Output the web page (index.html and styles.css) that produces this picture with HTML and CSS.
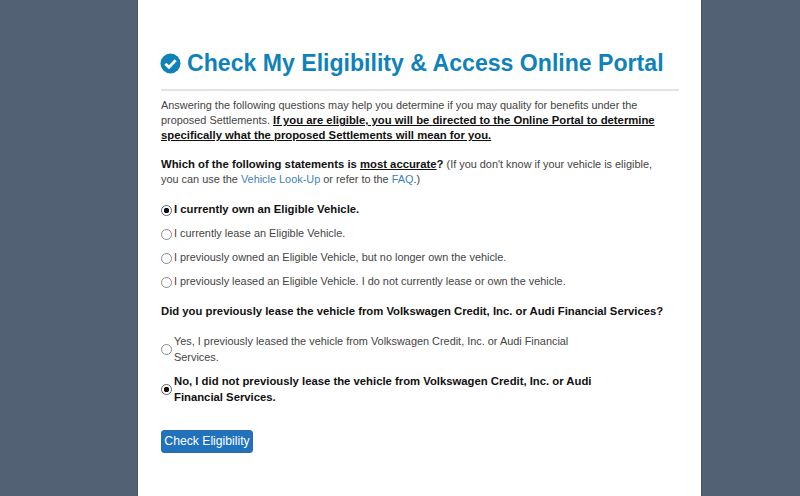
FILE: index.html
```html
<!DOCTYPE html>
<html lang="en">
<head>
  <meta charset="UTF-8">
  <title>Check My Eligibility</title>
  <link rel="stylesheet" href="styles.css">
</head>
<body>
  <div class="panel">
    <h1 class="page-title">
      <svg class="title-icon" viewBox="0 0 22 22" aria-hidden="true">
        <circle cx="11" cy="11" r="10.5" fill="#0f82b9"/>
        <path d="M5.6 11.2l3.8 3.8 7-7.4" fill="none" stroke="#fff" stroke-width="3"/>
      </svg>
      <span>Check My Eligibility &amp; Access Online Portal</span>
    </h1>

    <p class="intro">Answering the following questions may help you determine if you may quality for benefits under the proposed Settlements. <b><u>If you are eligible, you will be directed to the Online Portal to determine specifically what the proposed Settlements will mean for you.</u></b></p>

    <p class="question"><b>Which of the following statements is <u>most accurate</u>?</b> (If you don't know if your vehicle is eligible, you can use the <a href="#">Vehicle Look-Up</a> or refer to the <a href="#">FAQ</a>.)</p>

    <div class="options">
      <label class="option selected"><input type="radio" name="status" checked> I currently own an Eligible Vehicle.</label>
      <label class="option"><input type="radio" name="status"> I currently lease an Eligible Vehicle.</label>
      <label class="option"><input type="radio" name="status"> I previously owned an Eligible Vehicle, but no longer own the vehicle.</label>
      <label class="option"><input type="radio" name="status"> I previously leased an Eligible Vehicle. I do not currently lease or own the vehicle.</label>
    </div>

    <p class="question-two"><b>Did you previously lease the vehicle from Volkswagen Credit, Inc. or Audi Financial Services?</b></p>

    <div class="options-wide">
      <label class="option-wide"><input type="radio" name="lease"> <span>Yes, I previously leased the vehicle from Volkswagen Credit, Inc. or Audi Financial Services.</span></label>
      <label class="option-wide selected"><input type="radio" name="lease" checked> <span>No, I did not previously lease the vehicle from Volkswagen Credit, Inc. or Audi Financial Services.</span></label>
    </div>

    <button class="check-btn">Check Eligibility</button>
  </div>
</body>
</html>
```

FILE: styles.css
```css
html, body {
  height: 100%;
}

body {
  margin: 0;
  background-color: #526173;
  font-family: "Liberation Sans", Arial, sans-serif;
  font-size: 10.9px;
  line-height: 15.2px;
  color: #444;
  overflow: hidden;
}

.panel {
  box-sizing: border-box;
  width: 563px;
  height: 496px;
  margin-left: 138px;
  padding: 46px 22px 0 23px;
  background-color: #fff;
  box-shadow: 0 0 0 1px #465260;
}

.page-title {
  display: flex;
  align-items: center;
  gap: 6px;
  margin: 0 0 7px;
  padding: 0 0 9px;
  border-bottom: 2px solid #e2e2e2;
  font-size: 23.1px;
  line-height: 34px;
  white-space: nowrap;
  color: #0f82b9;
}

.title-icon {
  width: 21px;
  height: 21px;
  margin-left: -1px;
}

p {
  margin: 0;
}

b {
  font-size: 11.3px;
  color: #111;
}

a {
  color: #3f7fb8;
  text-decoration: none;
}

.intro {
  margin-bottom: 13px;
}

.question {
  max-width: 505px;
  margin-bottom: 15px;
}

.options {
  display: flex;
  flex-direction: column;
  gap: 8px;
}

.option {
  display: flex;
  align-items: center;
  height: 16px;
}

input[type="radio"] {
  appearance: none;
  flex: none;
  box-sizing: border-box;
  width: 11px;
  height: 11px;
  margin: 0 2px 0 0;
  border: 1px solid #8a8a8a;
  border-radius: 50%;
  background-color: #fff;
}

input[type="radio"]:checked {
  border-color: #666;
  background: radial-gradient(circle, #111 0 2.5px, #fff 3px);
}

.selected {
  font-size: 11.3px;
  font-weight: bold;
  color: #111;
}

.question-two {
  margin-top: 14px;
  margin-bottom: 14px;
}

.options-wide {
  display: flex;
  flex-direction: column;
  gap: 8px;
  line-height: 16px;
}

.option-wide {
  display: flex;
  align-items: center;
  width: 450px;
}

.check-btn {
  display: block;
  box-sizing: border-box;
  width: 92px;
  height: 23px;
  margin-top: 25px;
  padding: 0;
  border: 1px solid #2e6da4;
  border-radius: 3px;
  background-color: #1f72bb;
  color: #fff;
  font-family: inherit;
  font-size: 12.2px;
  line-height: 15px;
}
```
